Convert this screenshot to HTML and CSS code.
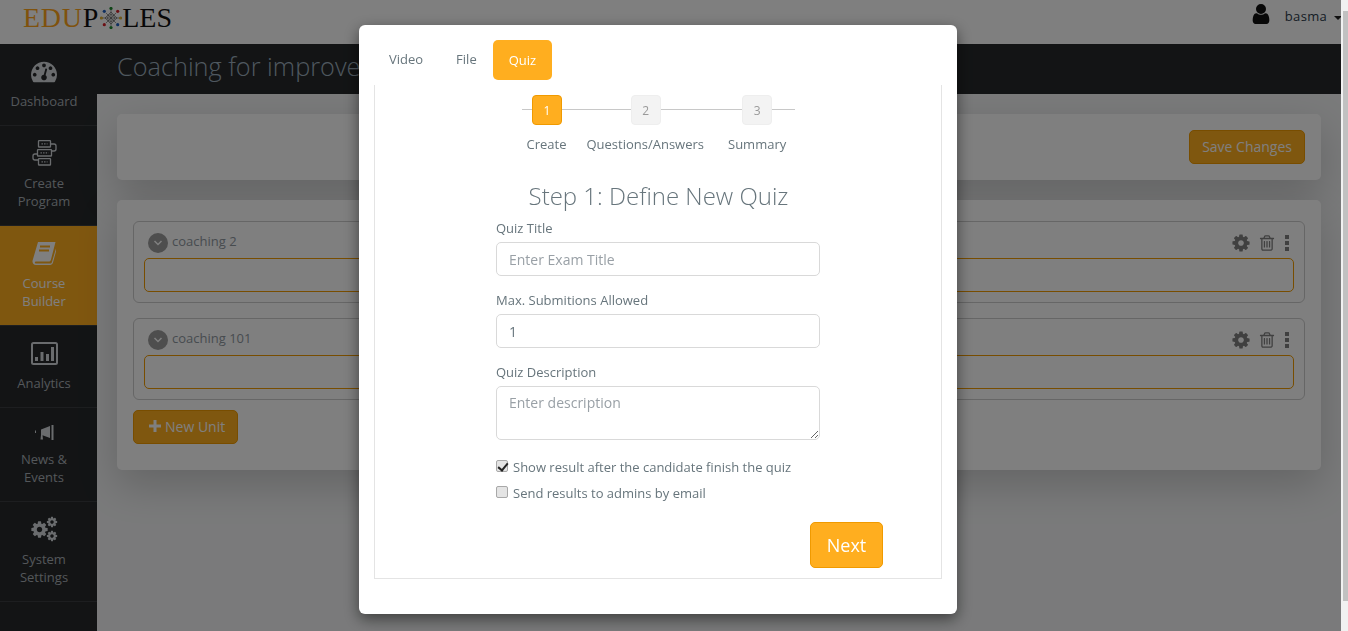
FILE: index.html
```html
<!DOCTYPE html>
<html lang="en">
<head>
    <meta charset="UTF-8">
    <title>Edupoles - Course Builder</title>
    <link rel="stylesheet" href="styles.css">
</head>
<body>

<svg class="defs" width="0" height="0">
    <symbol id="gear" viewBox="0 0 1792 1792">
        <path fill-rule="evenodd" d="M1152 896q0-106-75-181t-181-75-181 75-75 181 75 181 181 75 181-75 75-181zm512-109v222q0 12-8 23t-20 13l-185 28q-19 54-39 91 35 50 107 138 10 12 10 25t-9 23q-27 37-99 108t-94 71q-12 0-26-9l-138-108q-44 23-91 38-16 136-29 186-7 28-36 28h-222q-14 0-24.5-8.5t-11.5-21.5l-28-184q-49-16-90-37l-141 107q-10 9-25 9-14 0-25-11-126-114-165-168-7-10-7-23 0-12 8-23 15-21 51-66.5t54-70.5q-27-50-41-99l-183-27q-13-2-21-12.5t-8-23.5v-222q0-12 8-23t19-13l186-28q14-46 39-92-40-57-107-138-10-12-10-24 0-10 9-23 26-36 98.5-107.5t94.5-71.5q13 0 26 10l138 107q44-23 91-38 16-136 29-186 7-28 36-28h222q14 0 24.5 8.5t11.5 21.5l28 184q49 16 90 37l142-107q9-9 24-9 13 0 25 10 129 119 165 170 7 8 7 22 0 12-8 23-15 21-51 66.5t-54 70.5q26 50 41 98l183 28q13 2 21 12.5t8 23.5z"/>
    </symbol>
    <symbol id="trash" viewBox="0 0 1792 1792">
        <path d="M704 736v576q0 14-9 23t-23 9h-64q-14 0-23-9t-9-23v-576q0-14 9-23t23-9h64q14 0 23 9t9 23zm256 0v576q0 14-9 23t-23 9h-64q-14 0-23-9t-9-23v-576q0-14 9-23t23-9h64q14 0 23 9t9 23zm256 0v576q0 14-9 23t-23 9h-64q-14 0-23-9t-9-23v-576q0-14 9-23t23-9h64q14 0 23 9t9 23zm128 724v-948h-896v948q0 22 7 40.5t14.5 27 10.5 8.5h832q3 0 10.5-8.5t14.5-27 7-40.5zm-672-1076h448l-48-117q-7-9-17-11h-317q-10 2-17 11zm928 32v64q0 14-9 23t-23 9h-96v948q0 83-47 143.5t-113 60.5h-832q-66 0-113-58.5t-47-141.5v-952h-96q-14 0-23-9t-9-23v-64q0-14 9-23t23-9h309l70-167q15-37 54-63t79-26h320q40 0 79 26t54 63l70 167h309q14 0 23 9t9 23z"/>
    </symbol>
</svg>

<div class="page">
    <header class="topbar">
        <div class="logo">
            <span class="logo-edu">EDU</span><span class="logo-poles">P</span>
            <svg class="logo-o" width="22" height="22" viewBox="0 0 22 22">
                <g stroke="#555" stroke-width=".6" fill="none">
                    <path d="M11 5 17 11 11 17 5 11z"/>
                    <path d="M6 6 16 16M16 6 6 16M11 3v16M3 11h16"/>
                    <circle cx="11" cy="11" r="3.500"/>
                </g>
                <circle cx="11" cy="1.500" r="1.600" fill="#1e8a2e"/>
                <circle cx="17.700" cy="4.300" r="1.600" fill="#d8202a"/>
                <circle cx="20.500" cy="11" r="1.600" fill="#e0b030"/>
                <circle cx="17.700" cy="17.700" r="1.600" fill="#2060c0"/>
                <circle cx="11" cy="20.500" r="1.600" fill="#1e8a2e"/>
                <circle cx="4.300" cy="17.700" r="1.600" fill="#d8202a"/>
                <circle cx="1.500" cy="11" r="1.600" fill="#e0b030"/>
                <circle cx="4.300" cy="4.300" r="1.600" fill="#2060c0"/>
            </svg>
            <span class="logo-poles">LES</span>
        </div>
        <div class="user">
            <svg class="user-icon" viewBox="256 128 1280 1536"><path d="M1536 1399q0 109-62.5 187t-150.5 78h-854q-88 0-150.5-78t-62.5-187q0-85 8.5-160.5t31.5-152 58.5-131 94-89 134.5-34.5q131 128 313 128t313-128q76 0 134.5 34.5t94 89 58.5 131 31.5 152 8.5 160.5zm-256-887q0 159-112.5 271.5t-271.5 112.5-271.5-112.5-112.5-271.5 112.5-271.5 271.5-112.5 271.5 112.5 112.5 271.5z"/></svg>
            <span class="user-name">basma</span>
            <span class="caret"></span>
        </div>
    </header>

    <div class="main">
        <nav class="sidebar">
            <a class="nav-item">
                <span class="nav-icon">
                    <svg width="26" height="26" viewBox="0 0 1792 1792" fill="currentColor"><path d="M384 1152q0-53-37.5-90.5t-90.5-37.5-90.5 37.5-37.5 90.5 37.5 90.5 90.5 37.5 90.5-37.5 37.5-90.5zm192-448q0-53-37.5-90.5t-90.5-37.5-90.5 37.5-37.5 90.5 37.5 90.5 90.5 37.5 90.5-37.5 37.5-90.5zm428 481l101-382q6-26-7.5-48.5t-38.5-29.5-48 6.5-30 39.5l-101 382q-60 5-107 43.5t-63 98.5q-20 77 20 146t117 89 146-20 89-117q16-60-6-117t-72-91zm660-33q0-53-37.5-90.5t-90.5-37.5-90.5 37.5-37.5 90.5 37.5 90.5 90.5 37.5 90.5-37.5 37.5-90.5zm-640-640q0-53-37.5-90.5t-90.5-37.5-90.5 37.5-37.5 90.5 37.5 90.5 90.5 37.5 90.5-37.5 37.5-90.5zm448 192q0-53-37.5-90.5t-90.5-37.5-90.5 37.5-37.5 90.5 37.5 90.5 90.5 37.5 90.5-37.5 37.5-90.5zm320 448q0 261-141 483-19 29-54 29h-1402q-35 0-54-29-141-221-141-483 0-182 71-348t191-286 286-191 348-71 348 71 286 191 191 286 71 348z"/></svg>
                </span>
                Dashboard
            </a>
            <a class="nav-item">
                <span class="nav-icon">
                    <svg width="25" height="26" viewBox="0 0 25 26" fill="none" stroke="currentColor" stroke-width="1.300">
                        <rect x="6.500" y=".7" width="12" height="6.300" rx=".6"/>
                        <rect x="5.500" y="9.700" width="14" height="6.300" rx=".6"/>
                        <rect x="6.500" y="18.700" width="12" height="6.300" rx=".6"/>
                        <path d="M18.500 4h3.500a2 2 0 0 1 2 2v3a2 2 0 0 1-2 2h-2.500M5.500 14H3a2 2 0 0 0-2 2v2a2 2 0 0 0 2 2h3.500"/>
                        <path d="M9.500 3.900h6M8.500 12.900h8M9.500 21.900h6" stroke-dasharray="1.400 1.200"/>
                    </svg>
                </span>
                Create Program
            </a>
            <a class="nav-item nav-item-active">
                <span class="nav-icon">
                    <svg width="24" height="23" viewBox="0 0 24 23">
                        <path fill="currentColor" d="M6 0h17.500l-4.500 17.500c-.4 1.400-1 2-2.400 2H4.200c-1 0-1.600.9-1.300 1.400.3.6 1 .7 1.800.7h13c1 0 1.800-.3 2.100-1.200L24 6.500v3l-3 11c-.4 1.500-1.500 2.500-3 2.500H4C1.500 23 0 21 .6 18.500z"/>
                        <path d="M8 4.500h10M7 8.500h10" stroke="#ffae1f" stroke-width="1.800"/>
                    </svg>
                </span>
                Course Builder
            </a>
            <a class="nav-item">
                <span class="nav-icon">
                    <svg width="27" height="23" viewBox="0 0 27 23">
                        <rect x="1" y="1" width="25" height="21" rx="1.500" fill="none" stroke="currentColor" stroke-width="2"/>
                        <path fill="currentColor" d="M4 15h3v4H4zM9.500 10h3v9h-3zM15 12h3v7h-3zM20 5h3v14h-3z"/>
                    </svg>
                </span>
                Analytics
            </a>
            <a class="nav-item nav-item-short">
                <span class="nav-icon">
                    <svg width="19" height="15" viewBox="0 0 19 15" fill="currentColor">
                        <path d="M0 5.500h1v2.500H0zM2 4.500h4V10l-.5 4.500H8L7.500 10.200 15 13V1L6 4.500z"/>
                        <path d="M16.500 0h2v15h-2z"/>
                    </svg>
                </span>
                News &amp; Events
            </a>
            <a class="nav-item">
                <span class="nav-icon">
                    <svg width="28" height="26" viewBox="0 0 28 26" fill="currentColor">
                        <use href="#gear" x="0" y="4" width="19" height="19"/>
                        <use href="#gear" x="16" y="0" width="12" height="12"/>
                        <use href="#gear" x="16" y="14" width="12" height="12"/>
                    </svg>
                </span>
                System Settings
            </a>
        </nav>

        <main class="content">
            <div class="title-bar">Coaching for improve</div>
            <div class="panels">
                <section class="panel panel-actions">
                    <button class="btn-orange">Save Changes</button>
                </section>
                <section class="panel panel-units">
                    <div class="unit">
                        <div class="unit-head">
                            <span class="unit-toggle"><svg width="10" height="6" viewBox="0 0 10 6"><path d="M1.500 1 5 4.500 8.500 1" fill="none" stroke="currentColor" stroke-width="1.500"/></svg></span>
                            <span class="unit-name">coaching 2</span>
                            <span class="unit-tools">
                                <svg width="20" height="20"><use href="#gear"/></svg>
                                <svg width="18" height="18"><use href="#trash"/></svg>
                                <span class="dots"><i></i><i></i><i></i></span>
                            </span>
                        </div>
                        <div class="unit-drop"></div>
                    </div>
                    <div class="unit">
                        <div class="unit-head">
                            <span class="unit-toggle"><svg width="10" height="6" viewBox="0 0 10 6"><path d="M1.500 1 5 4.500 8.500 1" fill="none" stroke="currentColor" stroke-width="1.500"/></svg></span>
                            <span class="unit-name">coaching 101</span>
                            <span class="unit-tools">
                                <svg width="20" height="20"><use href="#gear"/></svg>
                                <svg width="18" height="18"><use href="#trash"/></svg>
                                <span class="dots"><i></i><i></i><i></i></span>
                            </span>
                        </div>
                        <div class="unit-drop"></div>
                    </div>
                    <button class="btn-orange btn-new">
                        <svg width="12" height="12" viewBox="0 0 12 12"><path d="M4.500 0h3v4.500H12v3H7.500V12h-3V7.500H0v-3h4.500z" fill="currentColor"/></svg>
                        New Unit
                    </button>
                </section>
            </div>
        </main>
    </div>
</div>

<div class="scrollbar"><div class="scrollbar-thumb"></div></div>
<div class="backdrop"></div>

<div class="modal">
    <ul class="tabs">
        <li class="tab">Video</li>
        <li class="tab">File</li>
        <li class="tab tab-active">Quiz</li>
    </ul>
    <div class="tab-body">
        <div class="stepper">
            <div class="step step-active">
                <span class="step-num">1</span>
                <span class="step-label">Create</span>
            </div>
            <div class="step">
                <span class="step-num">2</span>
                <span class="step-label">Questions/Answers</span>
            </div>
            <div class="step">
                <span class="step-num">3</span>
                <span class="step-label">Summary</span>
            </div>
        </div>

        <h2 class="step-title">Step 1: Define New Quiz</h2>

        <form class="quiz-form">
            <label class="field">
                <span class="field-label">Quiz Title</span>
                <input type="text" placeholder="Enter Exam Title">
            </label>
            <label class="field">
                <span class="field-label">Max. Submitions Allowed</span>
                <input type="text" value="1">
            </label>
            <label class="field">
                <span class="field-label">Quiz Description</span>
                <textarea placeholder="Enter description"></textarea>
            </label>
            <label class="check"><input type="checkbox" checked> Show result after the candidate finish the quiz</label>
            <label class="check"><input type="checkbox"> Send results to admins by email</label>
        </form>

        <div class="next-row">
            <button class="btn-next">Next</button>
        </div>
    </div>
</div>

</body>
</html>
```
FILE: styles.css
```css
* {
    box-sizing: border-box;
}
html, body {
    height: 100%;
    margin: 0;
    overflow: hidden;
}
body {
    font-family: "Open Sans", sans-serif;
    font-size: 13px;
    color: #67757c;
    background: #f4f5f6;
}
.defs {
    position: absolute;
}
.page {
    width: 1341px;
    height: 631px;
    display: flex;
    flex-direction: column;
    overflow: hidden;
}

/* top bar */
.topbar {
    height: 44px;
    flex: none;
    background: #fff;
    display: flex;
    justify-content: space-between;
    padding: 0 0 0 23px;
}
.logo {
    display: flex;
    align-items: flex-start;
    font-family: "Liberation Serif", serif;
    font-size: 28px;
    line-height: 36px;
}
.logo-edu {
    color: #ffa51a;
    letter-spacing: .7px;
}
.logo-poles {
    color: #111;
}
.logo-o {
    margin: 7px 0 0 2px;
}
.user {
    display: flex;
    align-items: flex-start;
    color: #333;
}
.user-icon {
    fill: #111;
    margin: 4px 15px 0 0;
    width: 18px;
    height: 20px;
}
.user-name {
    line-height: 32px;
    color: #2b3a4a;
    letter-spacing: .3px;
}
.caret {
    width: 0;
    height: 0;
    margin: 16px -1px 0 7px;
    border: 4px solid transparent;
    border-top-color: #222;
    border-bottom: 0;
}

.main {
    flex: 1;
    display: flex;
    min-height: 0;
}

/* sidebar */
.sidebar {
    width: 97px;
    flex: none;
    background: #26292b;
    color: #a8aeb4;
}
.nav-item {
    display: block;
    padding: 0 9px 15px 0;
    border-bottom: 1px solid #3a3d40;
    text-align: center;
    line-height: 18px;
}
.nav-icon {
    display: flex;
    align-items: center;
    justify-content: center;
    height: 48px;
    padding-top: 6px;
    color: #d4d8dc;
}
.nav-item-short .nav-icon {
    height: 42px;
}
.nav-item-active {
    background: #ffae1f;
    color: #fff;
}
.nav-item-active .nav-icon {
    color: #fff;
}

/* content */
.content {
    flex: 1;
    min-width: 0;
}
.title-bar {
    height: 50px;
    background: #26292b;
    color: #9fb0bf;
    font-size: 25.3px;
    font-weight: 300;
    line-height: 45px;
    padding-left: 20px;
    white-space: nowrap;
}
.panels {
    padding: 20px 20px 0;
    display: flex;
    flex-direction: column;
    gap: 20px;
}
.panel {
    background: #fff;
    border-radius: 5px;
    padding: 16px;
    box-shadow: 0 15px 40px rgba(0, 0, 0, .18);
}
.panel-actions {
    height: 66px;
    display: flex;
    justify-content: flex-end;
}
.panel-units {
    height: 270px;
    padding-top: 21px;
}
.btn-orange {
    height: 34px;
    padding: 0 12px 2px;
    background: #ffae1f;
    border: 1px solid #f09a00;
    border-radius: 5px;
    color: #fff;
    font: 14px "Open Sans", sans-serif;
}
.unit {
    height: 82px;
    border: 1px solid #ccc;
    border-radius: 6px;
    padding: 0 10px;
    margin-bottom: 15px;
}
.unit-head {
    height: 36px;
    display: flex;
    align-items: flex-start;
    padding: 11px 0 0 4px;
}
.unit-toggle {
    width: 20px;
    height: 20px;
    border-radius: 50%;
    background: #9c9c9c;
    color: #fff;
    display: flex;
    align-items: center;
    justify-content: center;
}
.unit-name {
    margin-left: 4px;
    line-height: 17px;
    color: #8f989f;
}
.unit-tools {
    margin-left: auto;
    margin-right: 5px;
    display: flex;
    align-items: center;
    gap: 7px;
    color: #808080;
}
.unit-tools svg {
    fill: currentColor;
}
.dots {
    display: flex;
    flex-direction: column;
    gap: 2px;
    margin-left: 2px;
}
.dots i {
    width: 4px;
    height: 4px;
    background: currentColor;
}
.unit-drop {
    height: 34px;
    border: 1px solid #f09a00;
    border-radius: 5px;
}
.btn-new {
    display: flex;
    align-items: center;
    gap: 4px;
    padding: 0 12px 2px 15px;
    margin-top: -5px;
}

.scrollbar {
    position: fixed;
    top: 0;
    right: 0;
    width: 7px;
    height: 100%;
    padding: 11px 0 0 2px;
    background: #f1f1f1;
}
.scrollbar-thumb {
    height: 590px;
    background: #c1c1c1;
}
.backdrop {
    position: fixed;
    top: 0;
    left: 0;
    right: 7px;
    bottom: 0;
    background: rgba(0, 0, 0, .5);
}

/* modal */
.modal {
    position: fixed;
    top: 25px;
    left: 359px;
    width: 598px;
    height: 589px;
    background: #fff;
    border-radius: 6px;
    padding: 15px;
    box-shadow: 0 5px 15px rgba(0, 0, 0, .5);
}
.tabs {
    display: flex;
    height: 45px;
    margin: 0;
    padding: 0;
    list-style: none;
}
.tab {
    height: 40px;
    padding: 0 16px 0 15px;
    margin-right: 2px;
    line-height: 38px;
}
.tab-active {
    margin-left: -2px;
    padding-left: 16px;
    background: #ffae1f;
    color: #fff;
    border-radius: 5px;
    line-height: 41px;
}
.tab-body {
    height: 494px;
    border: 1px solid #e4e4e4;
    border-top: 0;
    padding-top: 10px;
}

/* stepper */
.stepper {
    position: relative;
    width: 273px;
    margin: 0 auto;
    padding-left: 5px;
    display: flex;
    gap: 20px;
}
.stepper::before {
    content: "";
    position: absolute;
    top: 14px;
    left: 0;
    right: 0;
    height: 1px;
    background: #c8c8c8;
}
.step {
    position: relative;
    display: flex;
    flex-direction: column;
    align-items: center;
    gap: 9px;
}
.step-num {
    width: 30px;
    height: 30px;
    margin-left: 1px;
    border: 1px solid #eee;
    border-radius: 4px;
    background: #f3f3f3;
    color: #999;
    font-size: 12px;
    line-height: 30px;
    text-align: center;
}
.step-active .step-num {
    background: #ffae1f;
    border-color: #f09a00;
    color: #fff;
}
.step-label {
    line-height: 20px;
    white-space: nowrap;
}
.step:last-child {
    margin-left: 4px;
}
.step:last-child .step-num {
    margin-left: 0;
}
.step-title {
    margin: 26px 0 0;
    padding-left: 1px;
    font-size: 24px;
    font-weight: 300;
    line-height: 32px;
    text-align: center;
}

/* form */
.quiz-form {
    width: 324px;
    margin: 6px 0 0 121px;
}
.field {
    display: block;
    margin-bottom: 14px;
}
.field-label {
    display: block;
    line-height: 20px;
    margin-bottom: 4px;
}
.field input, .field textarea {
    display: block;
    width: 100%;
    height: 34px;
    padding: 0 12px;
    border: 1px solid #d9d9d9;
    border-radius: 5px;
    color: #67757c;
    font: 14px "Open Sans", sans-serif;
}
.field textarea {
    height: 54px;
    padding-top: 6px;
}
.field ::placeholder {
    color: #99a0a6;
}
.check {
    display: flex;
    align-items: center;
    height: 26px;
}
.check input {
    appearance: none;
    position: relative;
    width: 12px;
    height: 12px;
    margin: -3px 5px 0 0;
    flex: none;
    background: #e4e4e4;
    border: 1px solid #a8a8a8;
    border-radius: 2px;
}
.check input:checked::after {
    content: "";
    position: absolute;
    left: 3px;
    top: 0;
    width: 4px;
    height: 8px;
    border: solid #222;
    border-width: 0 2px 2px 0;
    transform: rotate(40deg);
}
.next-row {
    display: flex;
    justify-content: flex-end;
    padding-right: 58px;
    margin-top: 16px;
}
.btn-next {
    width: 73px;
    height: 46px;
    background: #ffae1f;
    border: 1px solid #f09a00;
    border-radius: 5px;
    color: #fff;
    font: 18px "Open Sans", sans-serif;
}
```
